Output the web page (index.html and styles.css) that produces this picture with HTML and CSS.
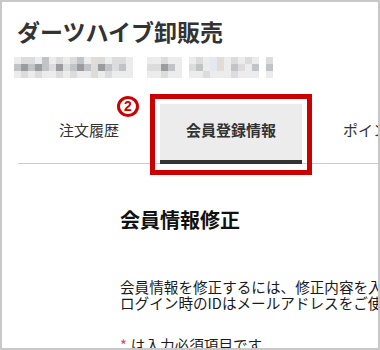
FILE: index.html
```html
<!DOCTYPE html>
<html lang="ja">
<head>
<meta charset="utf-8">
<title>ダーツハイブ卸販売</title>
<link rel="stylesheet" href="styles.css">
</head>
<body>
<div class="frame">
  <h1 class="site-title">ダーツハイブ卸販売</h1>
  <div class="mosaic" aria-hidden="true">
    <div class="mrow">
      <i class="l"></i><i class="m"></i><i class="m"></i><i class="l"></i><i class="g"></i><i class="l"></i><i class="m"></i><i class="l"></i><i class="m"></i><i class="g"></i><i class="l"></i><i class="b"></i><i class="m"></i><i class="l"></i><i class="m"></i><i class="m"></i><i class="l"></i>
      <i class="w"></i><i class="w"></i>
      <i class="l"></i><i class="l"></i><i class="m"></i><i class="l"></i><i class="l"></i>
      <i class="w"></i>
      <i class="l"></i><i class="m"></i><i class="l"></i><i class="t"></i><i class="b"></i><i class="l"></i><i class="m"></i><i class="l"></i><i class="m"></i><i class="l"></i><i class="w"></i><i class="m"></i>
    </div>
    <div class="mrow">
      <i class="g"></i><i class="d"></i><i class="g"></i><i class="d"></i><i class="g"></i><i class="m"></i><i class="d"></i><i class="m"></i><i class="g"></i><i class="d"></i><i class="g"></i><i class="m"></i><i class="d"></i><i class="g"></i><i class="m"></i><i class="g"></i><i class="l"></i>
      <i class="w"></i><i class="w"></i>
      <i class="m"></i><i class="m"></i><i class="d"></i><i class="g"></i><i class="l"></i>
      <i class="w"></i>
      <i class="m"></i><i class="g"></i><i class="l"></i><i class="t"></i><i class="b"></i><i class="l"></i><i class="g"></i><i class="m"></i><i class="l"></i><i class="g"></i><i class="w"></i><i class="g"></i>
    </div>
    <div class="mrow">
      <i class="l"></i><i class="m"></i><i class="l"></i><i class="m"></i><i class="l"></i><i class="l"></i><i class="m"></i><i class="l"></i><i class="m"></i><i class="l"></i><i class="l"></i><i class="m"></i><i class="l"></i><i class="m"></i><i class="l"></i><i class="l"></i><i class="l"></i>
      <i class="w"></i><i class="w"></i>
      <i class="l"></i><i class="l"></i><i class="m"></i><i class="l"></i><i class="l"></i>
      <i class="w"></i>
      <i class="l"></i><i class="l"></i><i class="m"></i><i class="l"></i><i class="l"></i><i class="l"></i><i class="m"></i><i class="l"></i><i class="l"></i><i class="l"></i><i class="w"></i><i class="l"></i>
    </div>
  </div>

  <nav class="tabs">
    <div class="tab">注文履歴</div>
    <div class="tab tab-active">会員登録情報</div>
    <div class="tab">ポイント</div>
  </nav>

  <section class="content">
    <h2 class="content-title">会員情報修正</h2>
    <p class="lead"><span class="lead-line">会員情報を修正するには、修正内容を入力し、確認ボタンを押してください。</span><span class="lead-line">ログイン時のIDはメールアドレスをご使用ください。</span></p>
    <p class="note"><span class="req">*</span>は入力必須項目です</p>
  </section>

  <div class="highlight" aria-hidden="true"></div>
  <span class="step-badge">2</span>
</div>
</body>
</html>
```

FILE: styles.css
```css
html, body {
  margin: 0;
  padding: 0;
  background: #ffffff;
}

.frame {
  position: relative;
  width: 380px;
  height: 350px;
  box-sizing: border-box;
  border: 2px solid #c8c8c8;
  background: #ffffff;
  overflow: hidden;
  font-family: "Noto Sans CJK JP", "Noto Sans", sans-serif;
  color: #222;
}

.site-title {
  margin: 15px 0 0 15px;
  font-size: 23px;
  line-height: 28px;
  font-weight: 700;
  color: #333;
  white-space: nowrap;
}

.mosaic {
  margin: 12px 0 0 12px;
  display: flex;
  flex-direction: column;
}

.mrow {
  display: flex;
  height: 7px;
}

.mrow i {
  display: block;
  width: 7px;
  height: 7px;
  flex-shrink: 0;
}

.mrow .w { background: #ffffff; }
.mrow .l { background: #ececec; }
.mrow .m { background: #dcdcdc; }
.mrow .g { background: #c2c3c6; }
.mrow .d { background: #9c9ca0; }
.mrow .b { background: #e2ddd4; }
.mrow .t { background: #e3e9f0; }

.tabs {
  display: flex;
  margin: 26px 0 0 16px;
  border-bottom: 1px solid #cccccc;
  white-space: nowrap;
}

.tab {
  flex: 0 0 142px;
  width: 142px;
  height: 59px;
  box-sizing: border-box;
  line-height: 51px;
  text-align: center;
  font-size: 15px;
  color: #333;
}

.tab-active {
  position: relative;
  background: #ececec;
  font-weight: 700;
}

.tab-active::after {
  content: "";
  position: absolute;
  left: 0;
  right: 0;
  bottom: -1px;
  height: 4px;
  background: #333333;
}

.content {
  padding-left: 118px;
  white-space: nowrap;
}

.content-title {
  margin: 42px 0 0 0;
  font-size: 20px;
  line-height: 28px;
  font-weight: 700;
  color: #111;
}

.lead {
  margin: 45px 0 0 0;
  font-size: 14.6px;
  line-height: 16px;
  color: #1a1a1a;
}

.lead-line {
  display: block;
  height: 16px;
  line-height: 16px;
}

.note {
  margin: 26px 0 0 0;
  font-size: 14.6px;
  line-height: 16px;
  color: #1a1a1a;
}

.req {
  color: #e2406f;
  margin-right: 4px;
}

.highlight {
  position: absolute;
  left: 148px;
  top: 92px;
  width: 162px;
  height: 81px;
  box-sizing: border-box;
  border: 5px solid #cc0000;
}

.step-badge {
  position: absolute;
  left: 115px;
  top: 94px;
  width: 22px;
  height: 21px;
  box-sizing: border-box;
  border: 3px solid #cc0000;
  border-radius: 50%;
  color: #cc0000;
  font-family: "Liberation Sans", Arial, sans-serif;
  font-weight: 700;
  font-size: 14px;
  line-height: 15px;
  text-align: center;
}
```
